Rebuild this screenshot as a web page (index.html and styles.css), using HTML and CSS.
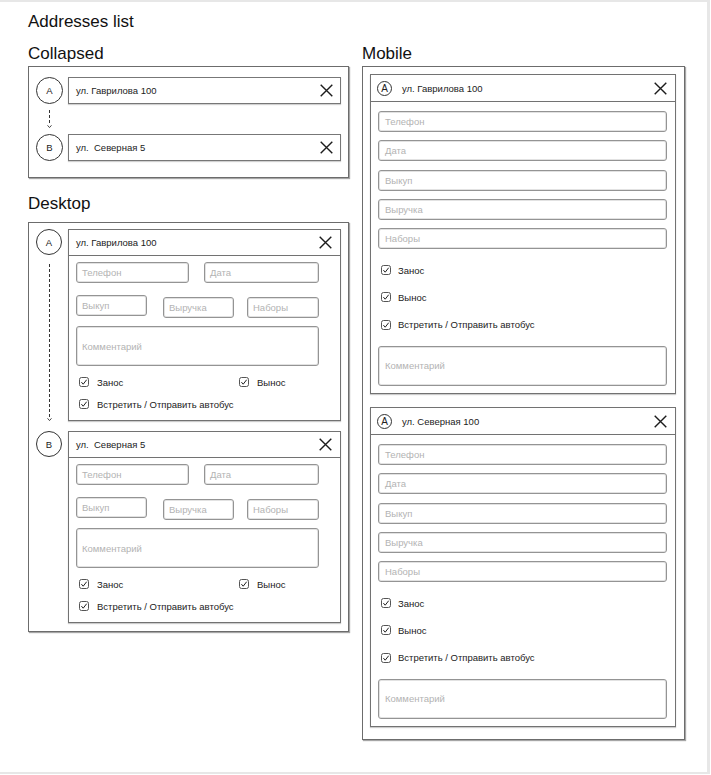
FILE: index.html
```html
<!DOCTYPE html>
<html lang="ru">
<head>
<meta charset="utf-8">
<title>Addresses list</title>
<link rel="stylesheet" href="styles.css">
</head>
<body>
<div class="page">
  <h1 class="title">Addresses list</h1>
  <div class="columns">
    <div class="col">
      <h2 class="heading">Collapsed</h2>
      <div class="frame collapsed">
        <div class="crow">
          <div class="circle lg">A</div>
          <div class="addr">
            <span class="addr-text">ул. Гаврилова 100</span>
            <svg class="xicon" width="13" height="13" viewBox="0 0 13 13"><path d="M0.7 0.7 L12.3 12.3 M12.3 0.7 L0.7 12.3"/></svg>
          </div>
        </div>
        <div class="connector">
          <div class="rail-s">
            <div class="dash"></div>
            <svg class="arrow" width="5" height="3" viewBox="0 0 5 3"><path d="M0.5 0.3 L2.5 2.6 L4.5 0.3"/></svg>
          </div>
        </div>
        <div class="crow">
          <div class="circle lg">B</div>
          <div class="addr">
            <span class="addr-text">ул.&nbsp; Северная 5</span>
            <svg class="xicon" width="13" height="13" viewBox="0 0 13 13"><path d="M0.7 0.7 L12.3 12.3 M12.3 0.7 L0.7 12.3"/></svg>
          </div>
        </div>
      </div>

      <h2 class="heading heading-desktop">Desktop</h2>
      <div class="frame desktop">
        <div class="ditem">
          <div class="rail">
            <div class="circle md">A</div>
            <div class="dash grow"></div>
            <svg class="arrow" width="5" height="3" viewBox="0 0 5 3"><path d="M0.5 0.3 L2.5 2.6 L4.5 0.3"/></svg>
          </div>
          <div class="card dcard">
            <div class="chead">
              <span class="addr-text">ул. Гаврилова 100</span>
              <svg class="xicon" width="13" height="13" viewBox="0 0 13 13"><path d="M0.7 0.7 L12.3 12.3 M12.3 0.7 L0.7 12.3"/></svg>
            </div>
            <div class="dbody">
              <div class="drow1">
                <div class="field w113">Телефон</div>
                <div class="field w115">Дата</div>
              </div>
              <div class="drow2">
                <div class="field w71">Выкуп</div>
                <div class="field w71 low gap16">Выручка</div>
                <div class="field w72 low gap13">Наборы</div>
              </div>
              <div class="field area darea">Комментарий</div>
              <div class="dchecks">
                <div class="check first">
                  <svg class="cb" width="10" height="10" viewBox="0 0 10 10"><rect x="0.5" y="0.5" width="9" height="9" rx="2"/><path class="tick" d="M2.4 5.1 L4.2 7.2 L7.7 2.7"/></svg>
                  <span>Занос</span>
                </div>
                <div class="check">
                  <svg class="cb" width="10" height="10" viewBox="0 0 10 10"><rect x="0.5" y="0.5" width="9" height="9" rx="2"/><path class="tick" d="M2.4 5.1 L4.2 7.2 L7.7 2.7"/></svg>
                  <span>Вынос</span>
                </div>
              </div>
              <div class="dchecks">
                <div class="check">
                  <svg class="cb" width="10" height="10" viewBox="0 0 10 10"><rect x="0.5" y="0.5" width="9" height="9" rx="2"/><path class="tick" d="M2.4 5.1 L4.2 7.2 L7.7 2.7"/></svg>
                  <span>Встретить / Отправить автобус</span>
                </div>
              </div>
            </div>
          </div>
        </div>

        <div class="ditem second">
          <div class="rail">
            <div class="circle md">B</div>
          </div>
          <div class="card dcard">
            <div class="chead">
              <span class="addr-text">ул.&nbsp; Северная 5</span>
              <svg class="xicon" width="13" height="13" viewBox="0 0 13 13"><path d="M0.7 0.7 L12.3 12.3 M12.3 0.7 L0.7 12.3"/></svg>
            </div>
            <div class="dbody">
              <div class="drow1">
                <div class="field w113">Телефон</div>
                <div class="field w115">Дата</div>
              </div>
              <div class="drow2">
                <div class="field w71">Выкуп</div>
                <div class="field w71 low gap16">Выручка</div>
                <div class="field w72 low gap13">Наборы</div>
              </div>
              <div class="field area darea">Комментарий</div>
              <div class="dchecks">
                <div class="check first">
                  <svg class="cb" width="10" height="10" viewBox="0 0 10 10"><rect x="0.5" y="0.5" width="9" height="9" rx="2"/><path class="tick" d="M2.4 5.1 L4.2 7.2 L7.7 2.7"/></svg>
                  <span>Занос</span>
                </div>
                <div class="check">
                  <svg class="cb" width="10" height="10" viewBox="0 0 10 10"><rect x="0.5" y="0.5" width="9" height="9" rx="2"/><path class="tick" d="M2.4 5.1 L4.2 7.2 L7.7 2.7"/></svg>
                  <span>Вынос</span>
                </div>
              </div>
              <div class="dchecks">
                <div class="check">
                  <svg class="cb" width="10" height="10" viewBox="0 0 10 10"><rect x="0.5" y="0.5" width="9" height="9" rx="2"/><path class="tick" d="M2.4 5.1 L4.2 7.2 L7.7 2.7"/></svg>
                  <span>Встретить / Отправить автобус</span>
                </div>
              </div>
            </div>
          </div>
        </div>
      </div>
    </div>

    <div class="col">
      <h2 class="heading">Mobile</h2>
      <div class="frame mobile">
        <div class="card mcard">
          <div class="mhead">
            <div class="circle sm">A</div>
            <span class="addr-text">ул. Гаврилова 100</span>
            <svg class="xicon" width="13" height="13" viewBox="0 0 13 13"><path d="M0.7 0.7 L12.3 12.3 M12.3 0.7 L0.7 12.3"/></svg>
          </div>
          <div class="mbody">
            <div class="field mfield">Телефон</div>
            <div class="field mfield">Дата</div>
            <div class="field mfield">Выкуп</div>
            <div class="field mfield">Выручка</div>
            <div class="field mfield">Наборы</div>
            <div class="check mcheck c1">
              <svg class="cb" width="10" height="10" viewBox="0 0 10 10"><rect x="0.5" y="0.5" width="9" height="9" rx="2"/><path class="tick" d="M2.4 5.1 L4.2 7.2 L7.7 2.7"/></svg>
              <span>Занос</span>
            </div>
            <div class="check mcheck c2">
              <svg class="cb" width="10" height="10" viewBox="0 0 10 10"><rect x="0.5" y="0.5" width="9" height="9" rx="2"/><path class="tick" d="M2.4 5.1 L4.2 7.2 L7.7 2.7"/></svg>
              <span>Вынос</span>
            </div>
            <div class="check mcheck c3">
              <svg class="cb" width="10" height="10" viewBox="0 0 10 10"><rect x="0.5" y="0.5" width="9" height="9" rx="2"/><path class="tick" d="M2.4 5.1 L4.2 7.2 L7.7 2.7"/></svg>
              <span>Встретить / Отправить автобус</span>
            </div>
            <div class="field area marea">Комментарий</div>
          </div>
        </div>

        <div class="card mcard second">
          <div class="mhead">
            <div class="circle sm">A</div>
            <span class="addr-text">ул. Северная 100</span>
            <svg class="xicon" width="13" height="13" viewBox="0 0 13 13"><path d="M0.7 0.7 L12.3 12.3 M12.3 0.7 L0.7 12.3"/></svg>
          </div>
          <div class="mbody">
            <div class="field mfield">Телефон</div>
            <div class="field mfield">Дата</div>
            <div class="field mfield">Выкуп</div>
            <div class="field mfield">Выручка</div>
            <div class="field mfield">Наборы</div>
            <div class="check mcheck c1">
              <svg class="cb" width="10" height="10" viewBox="0 0 10 10"><rect x="0.5" y="0.5" width="9" height="9" rx="2"/><path class="tick" d="M2.4 5.1 L4.2 7.2 L7.7 2.7"/></svg>
              <span>Занос</span>
            </div>
            <div class="check mcheck c2">
              <svg class="cb" width="10" height="10" viewBox="0 0 10 10"><rect x="0.5" y="0.5" width="9" height="9" rx="2"/><path class="tick" d="M2.4 5.1 L4.2 7.2 L7.7 2.7"/></svg>
              <span>Вынос</span>
            </div>
            <div class="check mcheck c3">
              <svg class="cb" width="10" height="10" viewBox="0 0 10 10"><rect x="0.5" y="0.5" width="9" height="9" rx="2"/><path class="tick" d="M2.4 5.1 L4.2 7.2 L7.7 2.7"/></svg>
              <span>Встретить / Отправить автобус</span>
            </div>
            <div class="field area marea">Комментарий</div>
          </div>
        </div>
      </div>
    </div>
  </div>
</div>
</body>
</html>
```

FILE: styles.css
```css
* { box-sizing: border-box; }

html, body {
  margin: 0;
  padding: 0;
  background: #ffffff;
}

body {
  font-family: "Liberation Sans", Arial, sans-serif;
  color: #1e1e1e;
}

.page {
  width: 710px;
  height: 774px;
  border-top: 2px solid #e7e7e7;
  border-right: 3px solid #e7e7e7;
  border-bottom: 2px solid #e7e7e7;
  padding: 10px 0 0 28px;
  background: #ffffff;
}

.title {
  margin: 0;
  font-size: 17px;
  line-height: 20px;
  font-weight: normal;
  color: #111;
}

.columns {
  display: grid;
  grid-template-columns: 321px 323px;
  column-gap: 13px;
  margin-top: 12px;
  align-items: start;
}

.col {
  display: flex;
  flex-direction: column;
}

.heading {
  margin: 0 0 2px;
  font-size: 17px;
  line-height: 20px;
  font-weight: normal;
  color: #111;
}

.heading-desktop {
  margin-top: 16px;
  margin-bottom: 8px;
}

.frame {
  border: 1px solid #6c6c6c;
  box-shadow: 1px 1px 1px rgba(0, 0, 0, 0.35);
  background: #fff;
}

/* circles */
.circle {
  flex: none;
  border: 1px solid #333;
  border-radius: 50%;
  display: flex;
  align-items: center;
  justify-content: center;
  color: #222;
  background: #fff;
}
.circle.lg { width: 27px; height: 27px; font-size: 9.5px; }
.circle.md { width: 26px; height: 26px; font-size: 9.5px; }
.circle.sm { width: 15px; height: 15px; font-size: 10px; }

.addr-text {
  font-size: 9.5px;
  color: #222;
  white-space: nowrap;
}

.xicon {
  flex: none;
  margin-left: auto;
}
.xicon path {
  stroke: #1c1c1c;
  stroke-width: 1.4;
  fill: none;
}

.dash {
  width: 1px;
  background: repeating-linear-gradient(to bottom, #333 0 3px, transparent 3px 5px);
}
.arrow { display: block; }
.arrow path {
  stroke: #333;
  stroke-width: 0.9;
  fill: none;
}

/* collapsed */
.collapsed {
  height: 112px;
  padding: 10px 7px 16px 7px;
}
.crow {
  display: flex;
  align-items: center;
  gap: 5px;
}
.addr {
  flex: 1;
  height: 27px;
  border: 1px solid #777;
  box-shadow: 0 1px 1px rgba(0, 0, 0, 0.18);
  display: flex;
  align-items: center;
  padding: 0 7px 0 7px;
}
.connector {
  height: 30px;
  padding-top: 6px;
}
.rail-s {
  width: 27px;
  display: flex;
  flex-direction: column;
  align-items: center;
}
.rail-s .dash { height: 15px; }

/* desktop */
.desktop {
  padding: 6px 7px 8px 7px;
}
.ditem {
  display: flex;
  gap: 6px;
}
.ditem.second { margin-top: 10px; }
.rail {
  width: 26px;
  flex: none;
  display: flex;
  flex-direction: column;
  align-items: center;
}
.rail .grow {
  flex: 1;
  margin-top: 9px;
}

.card {
  border: 1px solid #727272;
  box-shadow: 0 1px 1px rgba(0, 0, 0, 0.2);
  background: #fff;
}
.dcard {
  flex: 1;
  height: 192px;
}
.chead {
  height: 26px;
  border-bottom: 1px solid #727272;
  display: flex;
  align-items: center;
  padding: 0 8px 0 7px;
}
.dbody {
  padding: 6px 21px 0 7px;
}

.field {
  height: 21px;
  border: 1px solid #949494;
  border-radius: 3px;
  box-shadow: inset 0 0 0 1px #e2e2e2;
  display: flex;
  align-items: center;
  padding-left: 5px;
  font-size: 9.5px;
  color: #b3b3b3;
  white-space: nowrap;
}

.drow1 {
  display: flex;
  justify-content: space-between;
}
.w113 { width: 113px; }
.w115 { width: 115px; }
.w71 { width: 71px; }
.w72 { width: 72px; }
.drow2 {
  display: flex;
  align-items: flex-start;
  margin-top: 12px;
  height: 23px;
}
.low { margin-top: 2px; }
.gap16 { margin-left: 16px; }
.gap13 { margin-left: 13px; }

.area {
  height: 40px;
}
.darea { margin-top: 8px; }

.dchecks {
  display: flex;
  height: 12px;
  margin-top: 10px;
  padding-left: 3px;
}

.check {
  display: flex;
  align-items: center;
  gap: 8px;
  font-size: 9.5px;
  color: #222;
  white-space: nowrap;
}
.check.first { width: 160px; }

.cb { flex: none; display: block; }
.cb rect {
  fill: #fff;
  stroke: #555;
  stroke-width: 1;
}
.cb .tick {
  fill: none;
  stroke: #222;
  stroke-width: 1;
}

/* mobile */
.mobile {
  padding: 7px 8px 12px 7px;
}
.mcard {
  height: 320px;
}
.mcard.second { margin-top: 13px; }
.mhead {
  height: 27px;
  border-bottom: 1px solid #727272;
  display: flex;
  align-items: center;
  padding: 0 8px 0 6px;
}
.mhead .circle { margin-right: 10px; }

.mbody {
  padding: 9px 8px 0 7px;
  display: flex;
  flex-direction: column;
}
.mfield {
  padding-left: 6px;
  margin-top: 8.3px;
}
.mfield:first-child { margin-top: 0; }

.mcheck {
  height: 12px;
  padding-left: 3px;
  gap: 7px;
}
.mcheck.c1 { margin-top: 15px; }
.mcheck.c2 { margin-top: 15px; }
.mcheck.c3 { margin-top: 15.5px; }

.marea {
  margin-top: 15px;
  padding-left: 6px;
}
```
